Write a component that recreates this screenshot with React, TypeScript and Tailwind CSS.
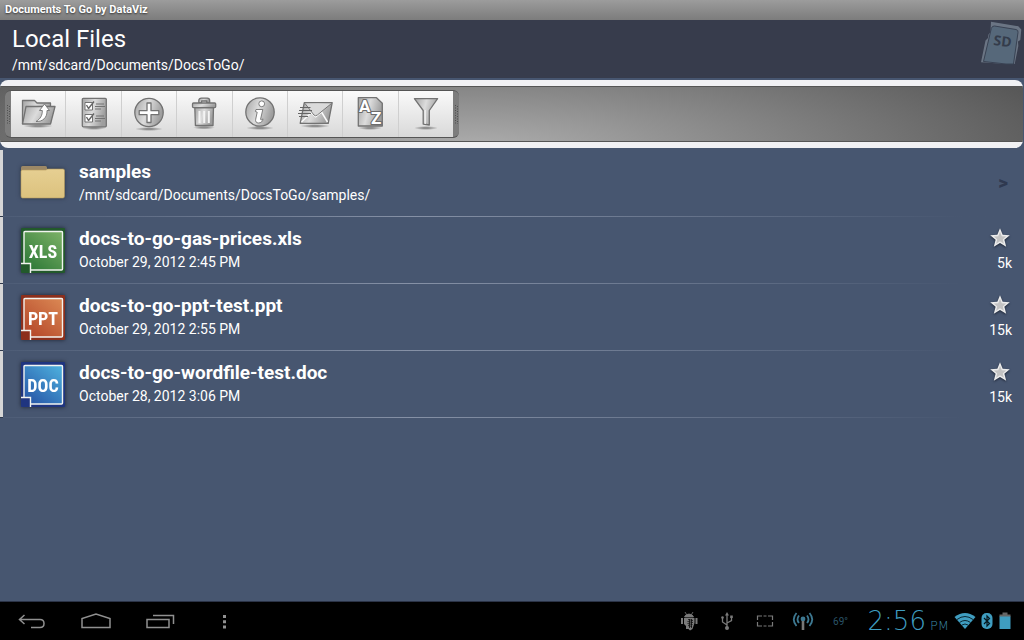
import { useState } from "react";
import type { ReactNode } from "react";

type FileKind = "xls" | "ppt" | "doc";

interface FileEntry {
  name: string;
  date: string;
  size: string;
  kind: FileKind;
}

const files: FileEntry[] = [
  { name: "docs-to-go-gas-prices.xls", date: "October 29, 2012 2:45 PM", size: "5k", kind: "xls" },
  { name: "docs-to-go-ppt-test.ppt", date: "October 29, 2012 2:55 PM", size: "15k", kind: "ppt" },
  { name: "docs-to-go-wordfile-test.doc", date: "October 28, 2012 3:06 PM", size: "15k", kind: "doc" },
];

const kindColors: Record<FileKind, { edge: string; light: string; dark: string }> = {
  xls: { edge: "#22592b", light: "#7fb368", dark: "#2f7a38" },
  ppt: { edge: "#8c2f1c", light: "#dc8a55", dark: "#b5482a" },
  doc: { edge: "#1f3580", light: "#4fb4e0", dark: "#2858a8" },
};

/* ---------- Toolbar icons ---------- */

function ToolIcon({ children }: { children: ReactNode }) {
  return (
    <svg width="36" height="36" viewBox="0 0 36 36" fill="url(#metal)" stroke="#727272" strokeWidth="1.3" strokeLinejoin="round" aria-hidden="true">
      {children}
    </svg>
  );
}

function Shade({ y = 33, rx = 14 }: { y?: number; rx?: number }) {
  return <ellipse cx="18" cy={y} rx={rx} ry="2" fill="url(#shade)" stroke="none" />;
}

const tools: { label: string; icon: ReactNode }[] = [
  {
    label: "Up one folder",
    icon: (
      <ToolIcon>
        <Shade y={30} rx={15} />
        <path d="M2.5 28V4.5H14.5L17 7H30.5V27" />
        <path d="M6 10.5H35L30.5 28H2.5Z" />
        <path d="M24.5 8L19.5 14.5H22.3C22.5 19 20.5 23 16 25.5C22.5 26 27.5 21.5 27 14.5H29.5Z" fill="#fff" strokeWidth="0.9" />
      </ToolIcon>
    ),
  },
  {
    label: "Select files",
    icon: (
      <ToolIcon>
        <Shade y={32} rx={12} />
        <rect x="6.3" y="2.3" width="24" height="28.5" rx="1" />
        <path d="M9 6.5H16.5V14H9ZM9 18.5H16.5V26H9Z" fill="#fff" strokeWidth="1" />
        <path d="M10.5 9L12.5 12.5L18 5.5M10.5 21L12.5 24.5L18 17.5" fill="none" stroke="#666" strokeWidth="1.4" />
        <path d="M20 8H28M19 10.5H29M19 13H25M20 20H28M19 22.5H29M19 25H25" fill="none" strokeWidth="1" />
      </ToolIcon>
    ),
  },
  {
    label: "New",
    icon: (
      <ToolIcon>
        <Shade y={33} />
        <circle cx="18" cy="16.5" r="14.2" />
        <path d="M16 7H20V14.7H27.8V18.7H20V26.5H16V18.7H8.2V14.7H16Z" fill="#fff" />
      </ToolIcon>
    ),
  },
  {
    label: "Delete",
    icon: (
      <ToolIcon>
        <Shade y={31.5} rx={11} />
        <path d="M12.8 7V4.5C12.8 3 14 2.2 15.3 2.2H21.2C22.8 2.2 23.7 3 23.7 4.5V7H20.8V5H15.6V7Z" />
        <path d="M8.8 11.5H27.5L27 29.5H9.4Z" />
        <rect x="6.5" y="7" width="23.2" height="4.6" rx="1" />
        <path d="M13.5 15V27M18.2 15V27M22.8 15V27" stroke="#f4f4f4" strokeWidth="2" />
      </ToolIcon>
    ),
  },
  {
    label: "Properties",
    icon: (
      <ToolIcon>
        <Shade y={32} />
        <circle cx="18" cy="16" r="14.2" />
        <circle cx="19.7" cy="7.8" r="2.9" fill="#fff" strokeWidth="0.9" />
        <path d="M14 13.5H20.8L18.6 23C18.5 24.2 19.6 24.2 21 22.8C21 25.5 18.8 27 16.5 27C14.2 27 13.2 25.4 13.7 23.2L15.2 16.2L13.4 15.5Z" fill="#fff" strokeWidth="0.9" />
      </ToolIcon>
    ),
  },
  {
    label: "Send",
    icon: (
      <ToolIcon>
        <Shade y={30} rx={15} />
        <path d="M7.3 6.7H35.2L31.2 27.3H3.2Z" />
        <path d="M8 7.5L17.5 20.5Q18.5 21.5 20 20.5L34.5 7.5Z" fill="#dadada" stroke="none" />
        <path d="M4.5 26L14.5 16.5L18.5 20.8L24.5 16L30.5 26" fill="none" stroke="#fafafa" strokeWidth="1.5" />
        <path d="M8 7.5L17 19Q18.5 20.5 20.3 19L34.5 7.5" fill="none" strokeWidth="1" />
        <path d="M3 11.5H13.5M2 14.5H15M1 17.5H14M2 20.5H11" stroke="#666" strokeWidth="1.1" />
      </ToolIcon>
    ),
  },
  {
    label: "Sort",
    icon: (
      <ToolIcon>
        <Shade y={32} rx={12} />
        <path d="M6.3 1.7H24.5L30.3 7.2V30H6.3Z" />
        <g fill="#fff" stroke="#6c6c6c" strokeWidth="2.2" className="font-['Roboto',sans-serif] text-[17px] font-bold" paintOrder="stroke">
          <text x="7" y="16">A</text>
          <text x="19" y="27.5">Z</text>
        </g>
      </ToolIcon>
    ),
  },
  {
    label: "Filter",
    icon: (
      <ToolIcon>
        <Shade y={32} rx={12} />
        <path d="M6.4 2.7H29.6L21.3 14.5V29L15.2 28V14.5Z" />
        <path d="M17.2 14V28" stroke="#f0f0f0" strokeWidth="1.4" />
      </ToolIcon>
    ),
  },
];

function Grip() {
  return (
    <svg width="6" height="46" viewBox="0 0 6 46" className="shrink-0" aria-hidden="true">
      <path d="M2.5 14V33M4.5 15V33" stroke="#4f4f4f" strokeWidth="1" strokeDasharray="1 1.5" />
    </svg>
  );
}

/* ---------- List icons ---------- */

function FolderIcon() {
  return (
    <svg width="46" height="46" viewBox="0 0 46 46" className="shrink-0 drop-shadow-[0_0_2px_#2b3548]" aria-hidden="true">
      <path d="M1 9V7.5Q1 6 2.5 6H25.5Q27 6 27 7.5V12H1Z" fill="#9c8866" />
      <path d="M1 11.5Q1 10 2.5 10H26L27.5 9H43Q44.5 9 44.5 10.5V36Q44.5 38 43 38H2.5Q1 38 1 36Z" fill="url(#folder)" stroke="#b59a5e" strokeWidth="0.6" />
    </svg>
  );
}

function FileIcon({ kind }: { kind: FileKind }) {
  const c = kindColors[kind];
  return (
    <svg width="46" height="46" viewBox="0 0 46 46" className="shrink-0 drop-shadow-[0_0_2px_#1c2433]" aria-hidden="true">
      <defs>
        <linearGradient id={`fill-${kind}`} x1="1" y1="0" x2="0.2" y2="1">
          <stop offset="0" stopColor={c.light} />
          <stop offset="1" stopColor={c.dark} />
        </linearGradient>
      </defs>
      <rect x="1" y="1" width="44" height="45" rx="1" fill={c.edge} />
      <path d="M4 4H43V43H10.5V36.5H4Z" fill={`url(#fill-${kind})`} />
      <path d="M1 36.5H10.5V46M4 36.5V5.5Q4 4.5 5 4.5H41.5Q42.5 4.5 42.5 5.5V42Q42.5 43 41.5 43H10.5" fill="none" stroke="#f2f4f0" strokeWidth="1.4" />
      <text x="23" y="31" textAnchor="middle" fill="#fff" className="font-['Liberation_Sans_Narrow','Roboto_Condensed','Roboto',sans-serif] text-[18px] font-bold uppercase">
        {kind}
      </text>
    </svg>
  );
}

function StarIcon() {
  return (
    <svg width="22" height="22" viewBox="0 0 22 22" className="drop-shadow-[0_1px_1px_#1c2433]" aria-hidden="true">
      <path d="M11 1.2L13.7 7.7L20.8 8.2L15.4 12.8L17.2 19.8L11 16L4.8 19.8L6.6 12.8L1.2 8.2L8.3 7.7Z" fill="#ececec" />
      <path d="M11 4.8L12.8 9.2L17.2 9.6L13.8 12.4L14.9 16.7L11 14.3L7.1 16.7L8.2 12.4L4.8 9.6L9.2 9.2Z" fill="#c3c3c3" />
    </svg>
  );
}

function SdCard() {
  return (
    <svg width="44" height="46" viewBox="0 0 44 46" aria-hidden="true">
      <path d="M11 1.7L38.3 6.2L41.3 9.5L40.3 20L38 21.5L38.3 26L34.7 44H26L1 42.3L5.5 20.5L8 18L8.5 14.5L10.5 12Z" fill="#6b7584" />
      <path d="M14.5 6L36 9.5Q38.5 10 38 12.5L33.5 44H26L3.5 41.5L11.3 8.5Q12 5.7 14.5 6Z" fill="#56687a" stroke="#394253" strokeWidth="1" />
      <text x="13" y="25" transform="rotate(7 13 25)" fill="#343c4b" className="font-['Open_Sans',sans-serif] text-[14px] font-bold">SD</text>
    </svg>
  );
}

/* ---------- System bar ---------- */

const navButtons: { label: string; icon: ReactNode }[] = [
  { label: "Back", icon: <path d="M8.5 4L3.5 8.5L8.5 13M4 8.5H24Q28 8.5 28 12.5T24 16.5H15" /> },
  { label: "Home", icon: <path d="M2 16.5V7.5L16 3L30 7.5V16.5Z" /> },
  { label: "Recent apps", icon: <path d="M3 8.5H25V16.5H3ZM9 4.5H29.5V13" /> },
  { label: "Menu", icon: <path d="M16.5 4V7M16.5 9.2V12.2M16.5 14.4V17.4" strokeWidth="3" /> },
];

function SystemBar() {
  return (
    <footer className="mt-auto flex h-[39px] items-center justify-between border-t border-[#2b3346] bg-black pr-3">
      <nav aria-label="System" className="flex">
        {navButtons.map((b) => (
          <button key={b.label} type="button" aria-label={b.label} className="flex h-9 w-16 items-center justify-center">
            <svg width="32" height="20" viewBox="0 0 32 20" fill="none" stroke="#909090" strokeWidth="1.5" aria-hidden="true">
              {b.icon}
            </svg>
          </button>
        ))}
      </nav>
      <div className="flex items-center">
        <div className="grid grid-cols-5 items-center justify-items-center text-[#7a7a7a]">
          <span className="flex w-[38px] justify-center">
            <svg width="18" height="20" viewBox="0 0 18 20" fill="currentColor" aria-hidden="true">
              <path d="M4.5 6Q5 3.3 9 3Q13 3.3 13.5 6ZM5 1L6.5 3.5M13 1L11.5 3.5" stroke="currentColor" strokeWidth="0.8" />
              <path d="M4 7H14.5V12L12.5 18L10 19.5L8.5 18H6V15L4 13ZM1 7H3V13H1ZM15.5 7H17.5V13H15.5Z" />
              <path d="M8 8.5L13 9.5M7.5 10.5L13 11.5M7.5 12.5L12.5 13.5M8 14.5L12 15.5M9.5 8V17M11.5 8V17" stroke="#000" strokeWidth="0.7" />
            </svg>
          </span>
          <span className="flex w-[38px] justify-center">
            <svg width="14" height="20" viewBox="0 0 14 20" fill="none" stroke="currentColor" strokeWidth="1.3" aria-hidden="true">
              <path d="M7 3V17M7 14L2.5 11V6.5M7 12L11.5 9.5V6" />
              <path d="M7 1L9 4.5H5Z" fill="currentColor" stroke="none" />
              <circle cx="7" cy="17" r="2" fill="currentColor" stroke="none" />
              <circle cx="2.5" cy="6.5" r="1.3" fill="currentColor" stroke="none" />
              <path d="M10.2 4.5H12.8V7H10.2Z" fill="currentColor" stroke="none" />
            </svg>
          </span>
          <span className="flex w-[38px] justify-center">
            <svg width="18" height="14" viewBox="0 0 18 14" fill="none" stroke="currentColor" strokeWidth="1.2" aria-hidden="true">
              <path d="M1.5 6V2H6M7.5 2H10.5M12 2H16.5V6M16.5 8V12H12M10.5 12H7.5M6 12H1.5V8" />
            </svg>
          </span>
          <span className="flex w-[38px] justify-center text-[#3d7891]">
            <svg width="22" height="20" viewBox="0 0 22 20" fill="none" stroke="currentColor" strokeWidth="1.8" aria-hidden="true">
              <path d="M7 12Q4 8.5 7 4.5M15 12Q18 8.5 15 4.5M4.5 15Q-1 8.5 4.5 2M17.5 15Q23 8.5 17.5 2" />
              <circle cx="11" cy="8" r="2.4" fill="currentColor" stroke="none" />
              <path d="M11 10V19" stroke="#777" strokeWidth="2.6" />
            </svg>
          </span>
          <span className="w-[38px] text-center text-[10px] text-[#2b5468]">69°</span>
        </div>
        <div className="ml-2 flex items-center gap-[5px] text-[#3f9dc0]">
          <time className="flex items-baseline gap-1 font-['DejaVu_Sans',sans-serif] font-extralight">
            <span className="text-[26px] leading-7">2:56</span>
            <span className="text-[13px] text-[#3b87a4]">PM</span>
          </time>
          <svg width="22" height="18" viewBox="0 0 22 18" fill="currentColor" aria-hidden="true">
            <path d="M0.5 5Q11 -3 21.5 5L11 17Z" />
            <path d="M3 7.5Q11 1.5 19 7.5M5.5 10.5Q11 6.5 16.5 10.5M8 13Q11 11 14 13" fill="none" stroke="#0a2530" strokeWidth="1" />
          </svg>
          <svg width="12" height="18" viewBox="0 0 12 18" aria-hidden="true">
            <rect x="0.5" y="1" width="11" height="16" rx="5" fill="currentColor" />
            <path d="M3 6L8.5 11.5L6 14V4L8.5 6.5L3 12" fill="none" stroke="#06181f" strokeWidth="1.2" />
          </svg>
          <svg width="14" height="18" viewBox="0 0 14 18" aria-hidden="true">
            <path d="M4.5 0.5H9.5V2.5H12.5V5H1.5V2.5H4.5Z" fill="#666" />
            <path d="M1.5 4.5H12.5V17H1.5Z" fill="currentColor" />
          </svg>
        </div>
      </div>
    </footer>
  );
}

/* ---------- Rows ---------- */

function Row({ icon, title, detail, end }: { icon: ReactNode; title: string; detail: string; end: ReactNode }) {
  return (
    <li>
      <div className="flex h-[66px] items-center border-l-3 border-[#d6d6d6] pr-3 pl-[17px]">
        {icon}
        <a href="#" className="ml-[13px] min-w-0 flex-1">
          <span className="block truncate text-[19px] leading-6 font-bold">{title}</span>
          <span className="block truncate text-[14px] leading-[22px]">{detail}</span>
        </a>
        {end}
      </div>
      <div className="h-px border-l-3 border-[#2e384b] bg-linear-to-r from-[#4d5c76] via-[#8691a6] via-40% to-[#475670] to-94%" />
    </li>
  );
}

export default function App() {
  const [starred, setStarred] = useState<string[]>([]);

  const toggleStar = (name: string) =>
    setStarred((prev) => (prev.includes(name) ? prev.filter((n) => n !== name) : [...prev, name]));

  return (
    <div className="flex min-h-screen flex-col bg-[#475670] font-['Roboto',sans-serif] text-white">
      {/* Shared gradients */}
      <svg width="0" height="0" className="absolute" aria-hidden="true">
        <defs>
          <linearGradient id="metal" x1="0" y1="0" x2="1" y2="0.3">
            <stop offset="0" stopColor="#a4a4a4" />
            <stop offset="0.5" stopColor="#dcdcdc" />
            <stop offset="1" stopColor="#9e9e9e" />
          </linearGradient>
          <radialGradient id="shade">
            <stop offset="0.3" stopColor="#8f8f8f" />
            <stop offset="1" stopColor="#8f8f8f" stopOpacity="0" />
          </radialGradient>
          <linearGradient id="folder" x1="0" y1="0" x2="0" y2="1">
            <stop offset="0" stopColor="#e6cf92" />
            <stop offset="1" stopColor="#dcc27e" />
          </linearGradient>
        </defs>
      </svg>

      <div className="h-5 bg-linear-to-b from-[#9c9c9c] to-[#7c7c7c] px-[5px] text-[11px] leading-5 font-bold text-shadow-[0_1px_2px_#333]">
        Documents To Go by DataViz
      </div>

      <header className="flex h-[58px] items-start justify-between bg-[#373c4c] pl-3">
        <div>
          <h1 className="pt-1 text-[24px] leading-[30px]">Local Files</h1>
          <p className="text-[14px] leading-[22px]">/mnt/sdcard/Documents/DocsToGo/</p>
        </div>
        <SdCard />
      </header>

      {/* Toolbar */}
      <div className="mt-0.5 mr-px overflow-hidden rounded-lg bg-[#f1f1f4] py-1.5">
        <div className="-mr-px border-y border-[#555] bg-[radial-gradient(ellipse_60%_250%_at_46%_120%,#b0b0b0,#585858)] px-[5px] py-[3px]">
          <div role="toolbar" aria-label="File actions" className="flex h-12 w-[454px] rounded-md border-y border-[#555] bg-[#7d7d7d]">
            <Grip />
            {tools.map((t) => (
              <button
                key={t.label}
                type="button"
                aria-label={t.label}
                className="flex flex-1 items-center justify-center border-r border-[#cfcfcf] bg-linear-to-b from-[#fafafa] to-[#d9d9d9] last-of-type:border-r-0"
              >
                {t.icon}
              </button>
            ))}
            <Grip />
          </div>
        </div>
      </div>

      <main className="pt-0.5">
        <ul>
          <Row
            icon={<FolderIcon />}
            title="samples"
            detail="/mnt/sdcard/Documents/DocsToGo/samples/"
            end={<span className="pr-1 text-[19px] leading-6 font-black text-[#2f3950]">&gt;</span>}
          />
          {files.map((f) => (
            <Row
              key={f.name}
              icon={<FileIcon kind={f.kind} />}
              title={f.name}
              detail={f.date}
              end={
                <div className="flex flex-col items-end gap-[3px]">
                  <button
                    type="button"
                    aria-label={`Star ${f.name}`}
                    aria-pressed={starred.includes(f.name)}
                    onClick={() => toggleStar(f.name)}
                    className="mr-px aria-pressed:brightness-125"
                  >
                    <StarIcon />
                  </button>
                  <span className="text-[14px] leading-[22px]">{f.size}</span>
                </div>
              }
            />
          ))}
        </ul>
      </main>

      <SystemBar />
    </div>
  );
}
